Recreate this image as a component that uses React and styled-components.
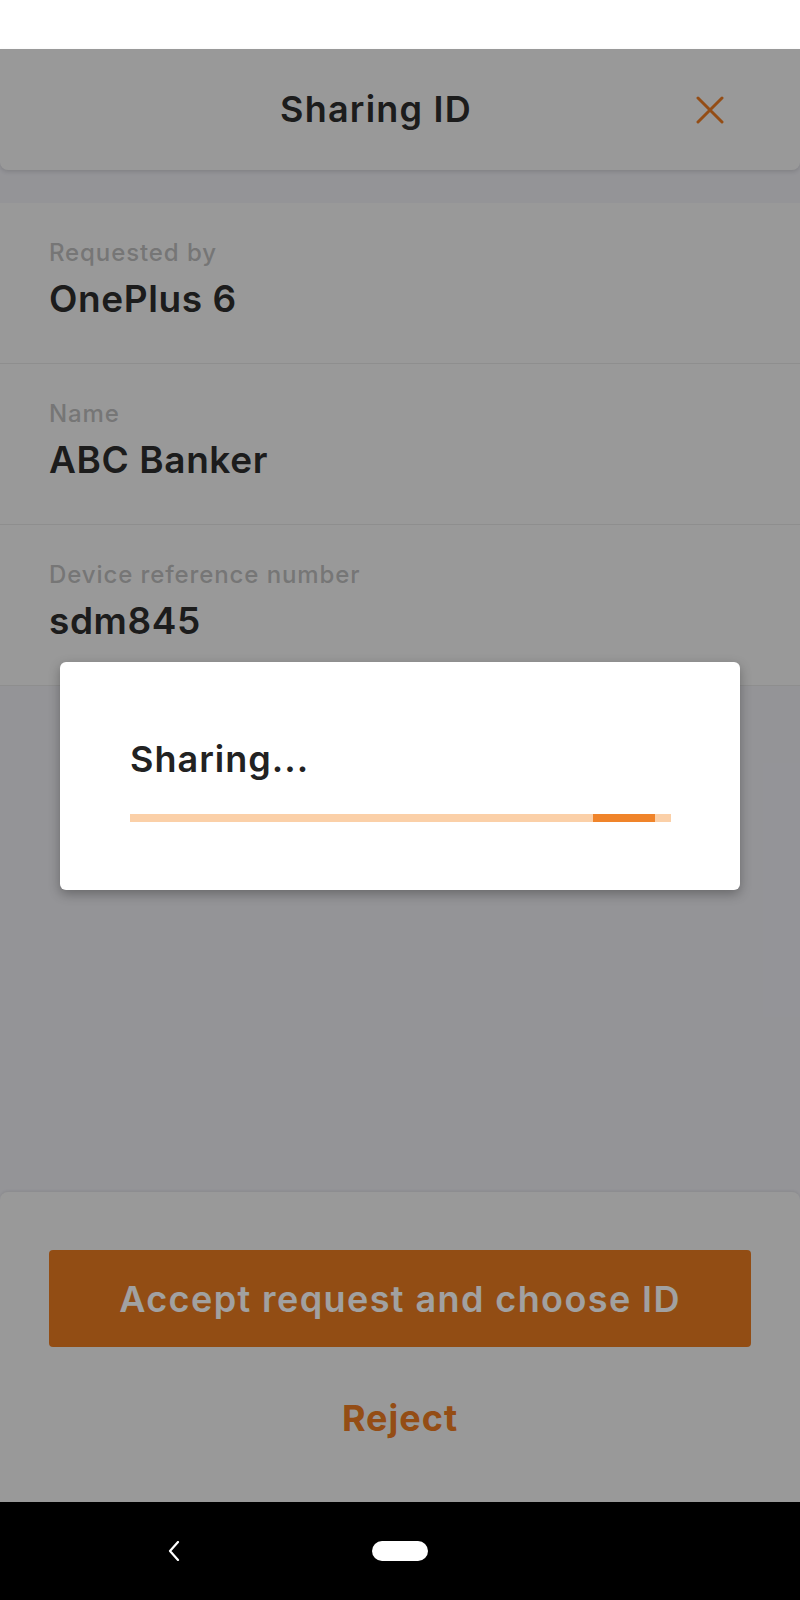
import React from "react";
import styled, { createGlobalStyle } from "styled-components";

const GlobalStyle = createGlobalStyle`
  html, body {
    margin: 0;
    padding: 0;
  }
  body {
    font-family: "Inter", "Noto Sans", sans-serif;
    background: #fff;
  }
  * {
    box-sizing: border-box;
  }
`;

const Screen = styled.div`
  width: 800px;
  height: 1600px;
  display: flex;
  flex-direction: column;
  overflow: hidden;
`;

const StatusBar = styled.div`
  height: 49px;
  background: #ffffff;
  flex-shrink: 0;
`;

const Main = styled.div`
  position: relative;
  flex: 1;
  display: flex;
  flex-direction: column;
  background: #eaeaf0;
`;

const Header = styled.div`
  height: 121px;
  flex-shrink: 0;
  display: flex;
  align-items: center;
  background: #f3f3f3;
  border-radius: 0 0 8px 8px;
  box-shadow: 0 2px 4px rgba(0, 0, 0, 0.12);
`;

const Title = styled.h1`
  flex: 1;
  margin: 0 0 2px;
  padding-left: 66px;
  text-align: center;
  font-size: 36px;
  font-weight: 600;
  color: #2d2d2d;
  letter-spacing: 1.2px;
`;

const CloseButton = styled.button`
  width: 48px;
  height: 48px;
  margin-right: 66px;
  padding: 0;
  border: none;
  background: transparent;
  display: flex;
  align-items: center;
  justify-content: center;
  color: #ea7a22;
`;

const InfoCard = styled.div`
  margin-top: 33px;
  background: #f3f3f3;
`;

const InfoRow = styled.div`
  height: 161px;
  padding: 34px 49px 0;
  border-bottom: 1px solid #e1e1e1;
`;

const Label = styled.div`
  font-size: 24px;
  line-height: 32px;
  font-weight: 500;
  color: #bbbbbb;
  letter-spacing: 0.9px;
`;

const Value = styled.div`
  margin-top: 8px;
  font-size: 37px;
  line-height: 44px;
  font-weight: 600;
  color: #2d2d2d;
  letter-spacing: 0.6px;
`;

const Spacer = styled.div`
  flex: 1;
`;

const BottomCard = styled.div`
  height: 310px;
  flex-shrink: 0;
  padding: 58px 49px 0;
  background: #f3f3f3;
  border-radius: 8px 8px 0 0;
  box-shadow: 0 -1px 3px rgba(0, 0, 0, 0.08);
  display: flex;
  flex-direction: column;
  align-items: stretch;
`;

const PrimaryButton = styled.button`
  height: 97px;
  border: none;
  border-radius: 4px;
  background: #e87a21;
  color: #ffffff;
  font-family: inherit;
  font-size: 36px;
  font-weight: 600;
  letter-spacing: 1.4px;
`;

const TextButton = styled.button`
  margin-top: 47px;
  height: 48px;
  border: none;
  background: transparent;
  color: #ea7a22;
  font-family: inherit;
  font-size: 36px;
  font-weight: 700;
  letter-spacing: 1px;
`;

const Backdrop = styled.div`
  position: absolute;
  inset: 0;
  background: rgba(0, 0, 0, 0.37);
  display: flex;
  align-items: center;
  justify-content: center;
`;

const Dialog = styled.div`
  width: 680px;
  height: 228px;
  padding: 75px 69px 0 70px;
  background: #ffffff;
  border-radius: 6px;
  box-shadow: 0 4px 12px rgba(0, 0, 0, 0.3);
`;

const DialogText = styled.div`
  font-size: 36px;
  line-height: 44px;
  font-weight: 600;
  color: #222222;
  letter-spacing: 1px;
`;

const Track = styled.div`
  position: relative;
  margin-top: 33px;
  height: 8px;
  background: #fbd0a8;
  overflow: hidden;
`;

const Indicator = styled.div`
  position: absolute;
  top: 0;
  bottom: 0;
  background: #f0842a;
`;

const NavBar = styled.div`
  height: 98px;
  flex-shrink: 0;
  background: #000000;
  display: flex;
  align-items: center;
`;

const NavBack = styled.div`
  width: 12px;
  margin-left: 168px;
  display: flex;
`;

const HomePill = styled.div`
  width: 56px;
  height: 20px;
  margin-left: 192px;
  border-radius: 10px;
  background: #ffffff;
`;

const rows = [
  { label: "Requested by", value: "OnePlus 6" },
  { label: "Name", value: "ABC Banker" },
  { label: "Device reference number", value: "sdm845" },
];

export default function App() {
  const progress = { start: 463, width: 62 };

  return (
    <>
      <GlobalStyle />
      <Screen>
        <StatusBar />
        <Main>
          <Header>
            <Title>Sharing ID</Title>
            <CloseButton aria-label="Close">
              <svg width="28" height="28" viewBox="0 0 28 28">
                <path
                  d="M2 2 L26 26 M26 2 L2 26"
                  stroke="currentColor"
                  strokeWidth="3"
                  strokeLinecap="round"
                />
              </svg>
            </CloseButton>
          </Header>

          <InfoCard>
            {rows.map((row) => (
              <InfoRow key={row.label}>
                <Label>{row.label}</Label>
                <Value>{row.value}</Value>
              </InfoRow>
            ))}
          </InfoCard>

          <Spacer />

          <BottomCard>
            <PrimaryButton>Accept request and choose ID</PrimaryButton>
            <TextButton>Reject</TextButton>
          </BottomCard>

          <Backdrop>
            <Dialog>
              <DialogText>Sharing...</DialogText>
              <Track>
                <Indicator
                  style={{ left: progress.start, width: progress.width }}
                />
              </Track>
            </Dialog>
          </Backdrop>
        </Main>
        <NavBar>
          <NavBack>
            <svg width="12" height="20" viewBox="0 0 12 20">
              <path
                d="M10 1 L2 10 L10 19"
                fill="none"
                stroke="#fff"
                strokeWidth="2.2"
                strokeLinecap="round"
                strokeLinejoin="round"
              />
            </svg>
          </NavBack>
          <HomePill />
        </NavBar>
      </Screen>
    </>
  );
}
